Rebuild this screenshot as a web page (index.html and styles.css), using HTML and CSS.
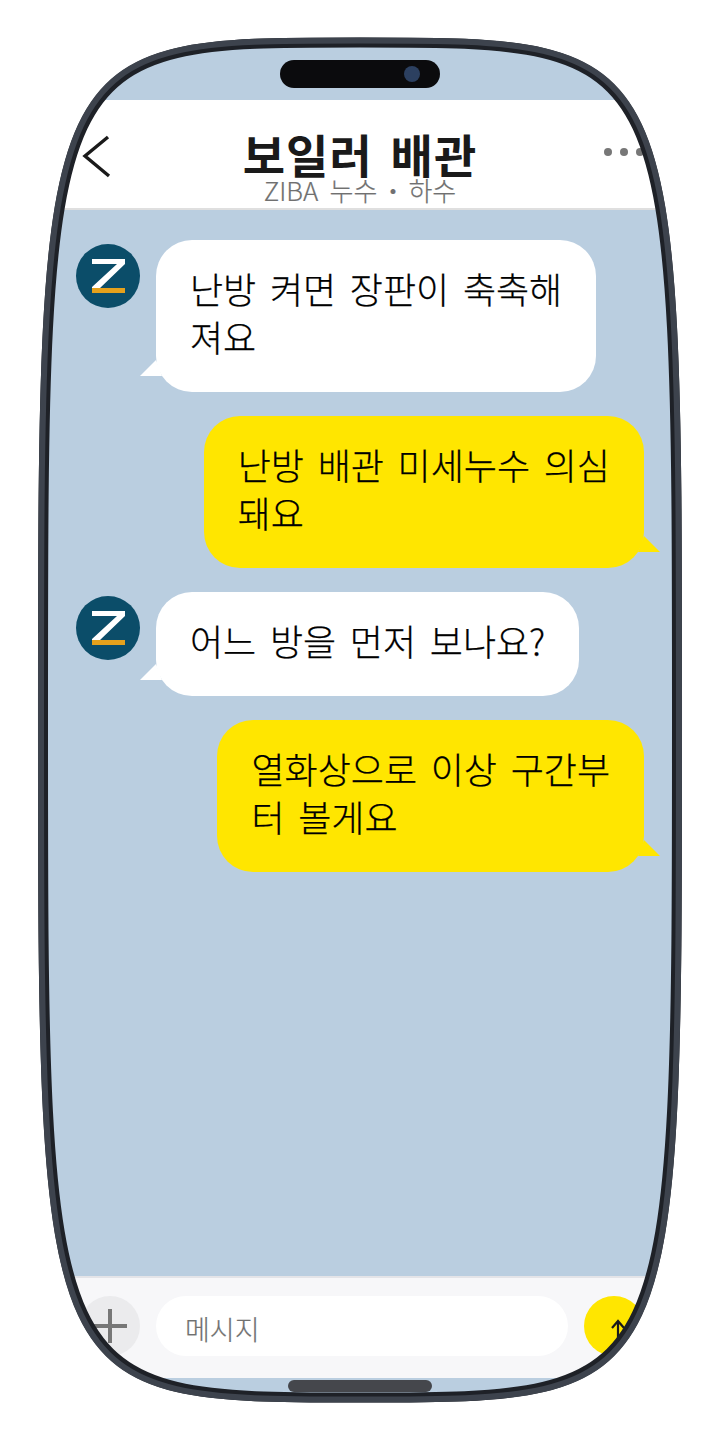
FILE: index.html
```html
<!DOCTYPE html>
<html lang="ko">
<head>
    <meta charset="UTF-8">
    <meta name="viewport" content="width=device-width, initial-scale=1.0">
    <title>보일러 배관</title>
    <link rel="stylesheet" href="styles.css">
</head>
<body>
    <div class="phone">
        <div class="status-area">
            <div class="notch"><span class="camera"></span></div>
        </div>

        <header class="chat-header">
            <svg class="back-icon" width="40" height="48" viewBox="0 0 40 48">
                <path d="M32 7 L9 26 L33 46" fill="none" stroke="#1a1a1a" stroke-width="3.4"/>
            </svg>
            <div class="title-block">
                <div class="chat-title">보일러 배관</div>
                <div class="chat-subtitle">ZIBA 누수 <span class="sep">·</span> 하수</div>
            </div>
            <div class="more-dots"><span></span><span></span><span></span></div>
        </header>

        <main class="chat-list">
            <div class="message-row">
                <svg class="avatar" width="64" height="64" viewBox="0 0 64 64">
                    <circle cx="32" cy="32" r="32" fill="#0b4d69"/>
                    <path d="M16 15 H49 V20 L24 44 H16 V43 L41 20 H16 Z" fill="#fff"/>
                    <rect x="16" y="44" width="33" height="5" fill="#e5a11c"/>
                </svg>
                <div class="bubble bubble-in">난방 켜면 장판이 축축해<br>져요</div>
            </div>
            <div class="message-row mine">
                <div class="bubble bubble-out">난방 배관 미세누수 의심<br>돼요</div>
            </div>
            <div class="message-row">
                <svg class="avatar" width="64" height="64" viewBox="0 0 64 64">
                    <circle cx="32" cy="32" r="32" fill="#0b4d69"/>
                    <path d="M16 15 H49 V20 L24 44 H16 V43 L41 20 H16 Z" fill="#fff"/>
                    <rect x="16" y="44" width="33" height="5" fill="#e5a11c"/>
                </svg>
                <div class="bubble bubble-in">어느 방을 먼저 보나요?</div>
            </div>
            <div class="message-row mine">
                <div class="bubble bubble-out">열화상으로 이상 구간부<br>터 볼게요</div>
            </div>
        </main>

        <footer class="input-bar">
            <div class="plus-button"></div>
            <div class="message-input">메시지</div>
            <div class="send-button">
                <svg width="16" height="24" viewBox="0 0 16 24">
                    <path d="M8 2 V24 M2 9 L8 2 L14 9" fill="none" stroke="#1a1a1a" stroke-width="2.2"/>
                </svg>
            </div>
        </footer>

        <div class="home-area"><span class="home-indicator"></span></div>

        <svg class="device-frame" width="720" height="1440" viewBox="0 0 720 1440">
            <defs>
                <path id="edge" d="M360 42.5 C677 42.5 677 42.5 677 720 C677 1397.5 677 1397.5 360 1397.5 C43 1397.5 43 1397.5 43 720 C43 42.5 43 42.5 360 42.5 Z"/>
            </defs>
            <path fill="#fff" fill-rule="evenodd" d="M0 0 H720 V1440 H0 Z M360 42.5 C677 42.5 677 42.5 677 720 C677 1397.5 677 1397.5 360 1397.5 C43 1397.5 43 1397.5 43 720 C43 42.5 43 42.5 360 42.5 Z"/>
            <use href="#edge" fill="none" stroke="#1e2127" stroke-width="10"/>
            <use href="#edge" fill="none" stroke="#3d434d" stroke-width="6" transform="translate(360 720) scale(1.0063 1.003) translate(-360 -720)"/>
        </svg>
    </div>
</body>
</html>
```

FILE: styles.css
```css
body {
    margin: 0;
    background-color: white;
    font-family: 'Noto Sans CJK KR', 'Noto Sans', sans-serif;
}

.phone {
    position: relative;
    width: 720px;
    height: 1440px;
    display: flex;
    flex-direction: column;
    background-color: #bacee0;
    overflow: hidden;
}

.device-frame {
    position: absolute;
    top: 0;
    left: 0;
    pointer-events: none;
}

/* Top of the screen */
.status-area {
    height: 100px;
    box-sizing: border-box;
    padding-top: 60px;
    display: flex;
    justify-content: center;
}

.notch {
    position: relative;
    width: 160px;
    height: 28px;
    border-radius: 14px;
    background-color: #0b0b0d;
}

.camera {
    position: absolute;
    top: 6px;
    right: 20px;
    width: 16px;
    height: 16px;
    border-radius: 50%;
    background-color: #2c4060;
}

.chat-header {
    height: 110px;
    box-sizing: border-box;
    padding: 0 76px;
    display: flex;
    align-items: center;
    justify-content: space-between;
    background-color: white;
    border-bottom: 2px solid #dfdfdf;
}

.title-block {
    text-align: center;
    padding-top: 24px;
}

.chat-title {
    font-size: 46px;
    font-weight: 700;
    line-height: 48px;
    letter-spacing: 1px;
    word-spacing: 4px;
    color: #1a1a1a;
}

.chat-subtitle {
    font-size: 26px;
    font-weight: 300;
    line-height: 26px;
    word-spacing: 4px;
    color: #707070;
    -webkit-text-stroke: 0.2px #707070;
}

.sep {
    font-weight: 700;
}

.more-dots {
    width: 40px;
    padding-bottom: 4px;
    display: flex;
    justify-content: space-between;
}

.more-dots span {
    width: 8px;
    height: 8px;
    border-radius: 50%;
    background-color: #777;
}

/* Messages */
.chat-list {
    flex: 1;
    box-sizing: border-box;
    padding: 30px 76px 0;
    display: flex;
    flex-direction: column;
    gap: 24px;
}

.message-row {
    display: flex;
    align-items: flex-start;
    gap: 16px;
}

.message-row.mine {
    justify-content: flex-end;
}

.avatar {
    margin-top: 4px;
    flex-shrink: 0;
}

.bubble {
    position: relative;
    padding: 24px 34px 32px;
    border-radius: 36px;
    font-size: 36px;
    font-weight: 300;
    line-height: 48px;
    word-spacing: 3.6px;
    color: #000;
    -webkit-text-stroke: 0.25px #000;
}

.bubble-in {
    background-color: white;
}

.bubble-out {
    background-color: #ffe600;
}

.bubble::after {
    content: '';
    position: absolute;
    bottom: 16px;
    width: 22px;
    height: 16px;
    background-color: inherit;
}

.bubble-in::after {
    left: -16px;
    clip-path: polygon(0 100%, 16px 0, 100% 100%);
}

.bubble-out::after {
    right: -16px;
    clip-path: polygon(100% 100%, 6px 0, 0 100%);
}

/* Input bar */
.input-bar {
    height: 102px;
    box-sizing: border-box;
    padding: 18px 76px 0 80px;
    display: flex;
    align-items: flex-start;
    gap: 16px;
    background-color: #f7f7f9;
    border-top: 2px solid #e4e4e8;
}

.plus-button {
    position: relative;
    width: 60px;
    height: 60px;
    border-radius: 50%;
    background-color: #ebebed;
}

.plus-button:before, .plus-button:after {
    content: '';
    position: absolute;
    background-color: #777;
}

.plus-button:before {
    left: 13px;
    top: 28px;
    width: 34px;
    height: 4px;
}

.plus-button:after {
    left: 28px;
    top: 13px;
    width: 4px;
    height: 34px;
}

.message-input {
    flex: 1;
    height: 60px;
    padding-left: 29px;
    border-radius: 30px;
    background-color: white;
    font-size: 27px;
    font-weight: 300;
    line-height: 66px;
    color: #707070;
    -webkit-text-stroke: 0.2px #707070;
}

.send-button {
    box-sizing: border-box;
    width: 60px;
    height: 60px;
    padding: 10px 0 0 8px;
    display: flex;
    align-items: center;
    justify-content: center;
    border-radius: 50%;
    background-color: #ffe600;
}

.home-area {
    flex: 0 0 60px;
    padding-top: 2px;
    display: flex;
    justify-content: center;
    align-items: flex-start;
}

.home-indicator {
    width: 144px;
    height: 12px;
    border-radius: 6px;
    background-color: #45474c;
}
```
